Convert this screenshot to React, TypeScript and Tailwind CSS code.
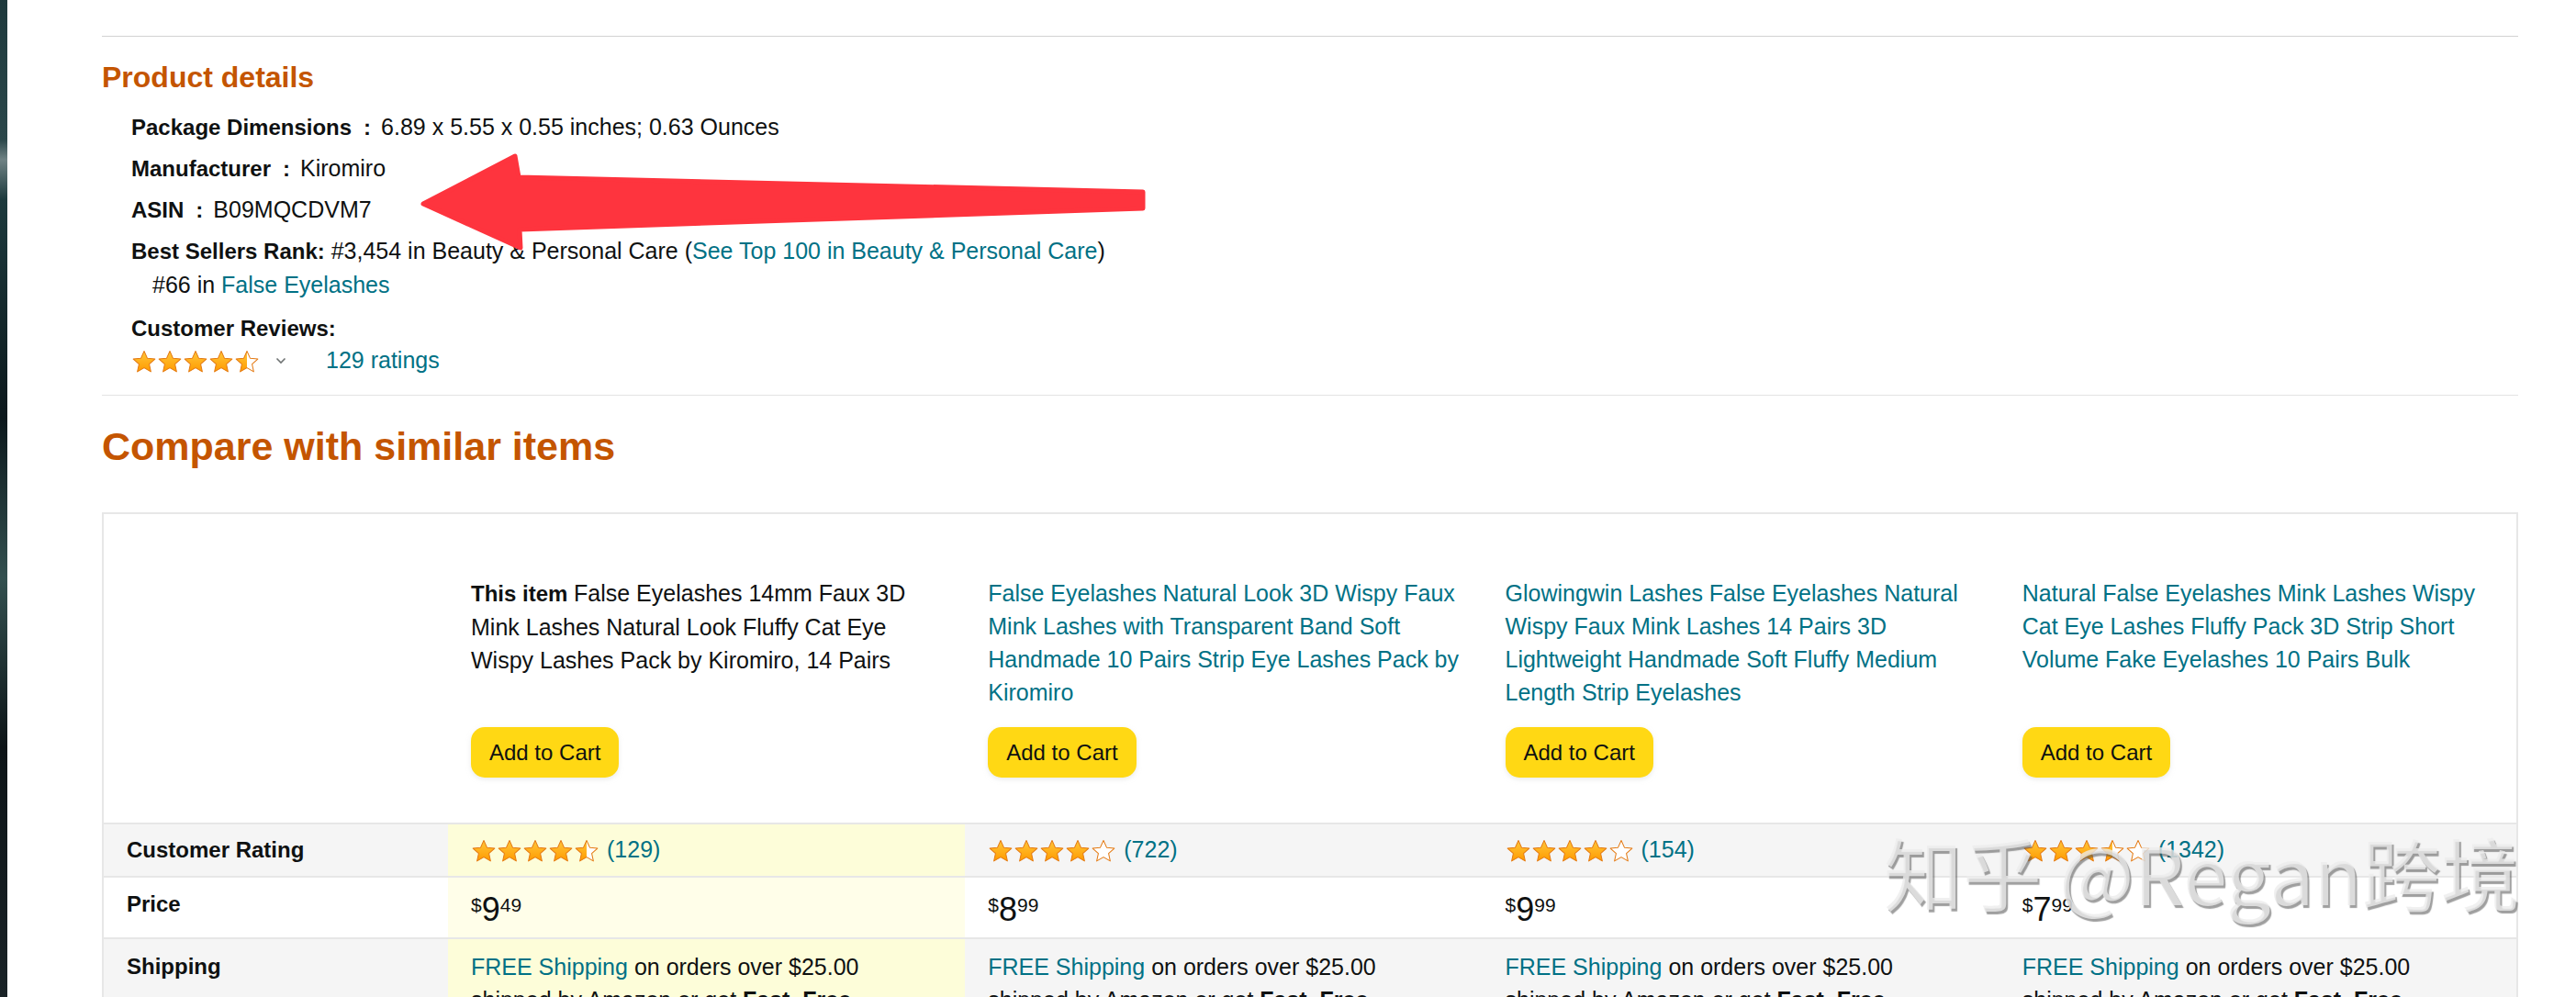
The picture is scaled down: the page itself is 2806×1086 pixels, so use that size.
import { useId } from 'react'

type Fill = 'full' | 'half' | 'empty'

const STAR_PTS = '12,1.4 15.1,8.2 22.6,9 17,14 18.6,21.4 12,17.6 5.4,21.4 7,14 1.4,9 8.9,8.2'

function Star({ fill }: { fill: Fill }) {
  const id = useId().replace(/:/g, '')
  return (
    <svg width="28" height="25" viewBox="0 0 24 22.4" className="shrink-0">
      <defs>
        <linearGradient id={`g${id}`} x1="0" y1="0" x2="0" y2="1">
          <stop offset="0" stopColor="#ffc73a" />
          <stop offset="1" stopColor="#ff9a00" />
        </linearGradient>
        <clipPath id={`c${id}`}>
          <rect x="0" y="0" width={fill === 'half' ? 12 : 24} height="24" />
        </clipPath>
      </defs>
      <polygon points={STAR_PTS} fill="#fff" />
      {fill !== 'empty' && <polygon points={STAR_PTS} fill={`url(#g${id})`} clipPath={`url(#c${id})`} />}
      <polygon points={STAR_PTS} fill="none" stroke="#e47911" strokeWidth="0.9" strokeLinejoin="round" />
    </svg>
  )
}

function Stars({ rating }: { rating: number }) {
  const fills: Fill[] = [0, 1, 2, 3, 4].map(i =>
    rating >= i + 1 ? 'full' : rating >= i + 0.5 ? 'half' : 'empty'
  )
  return (
    <div className="flex">
      {fills.map((f, i) => <Star key={i} fill={f} />)}
    </div>
  )
}

const ITEMS = [
  {
    lines: ['False Eyelashes 14mm Faux 3D', 'Mink Lashes Natural Look Fluffy Cat Eye', 'Wispy Lashes Pack by Kiromiro, 14 Pairs'],
    self: true,
    rating: 4.5,
    count: '129',
    dollars: '9',
    cents: '49',
  },
  {
    lines: ['False Eyelashes Natural Look 3D Wispy Faux', 'Mink Lashes with Transparent Band Soft', 'Handmade 10 Pairs Strip Eye Lashes Pack by', 'Kiromiro'],
    self: false,
    rating: 4,
    count: '722',
    dollars: '8',
    cents: '99',
  },
  {
    lines: ['Glowingwin Lashes False Eyelashes Natural', 'Wispy Faux Mink Lashes 14 Pairs 3D', 'Lightweight Handmade Soft Fluffy Medium', 'Length Strip Eyelashes'],
    self: false,
    rating: 4,
    count: '154',
    dollars: '9',
    cents: '99',
  },
  {
    lines: ['Natural False Eyelashes Mink Lashes Wispy', 'Cat Eye Lashes Fluffy Pack 3D Strip Short', 'Volume Fake Eyelashes 10 Pairs Bulk'],
    self: false,
    rating: 3.5,
    count: '1342',
    dollars: '7',
    cents: '99',
  },
]

function Sep() {
  return <span className="ml-[13px] mr-[11px] text-[24px] font-bold">:</span>
}

function Arrow() {
  return (
    <svg className="pointer-events-none absolute left-0 top-0" width="2806" height="1086">
      <polygon
        points="461,222 561,170 565,193 1245,209 1245,227 566,250 567,270"
        fill="#fe343e"
        stroke="#fe343e"
        strokeWidth="5"
        strokeLinejoin="round"
      />
    </svg>
  )
}

export default function App() {
  return (
    <div className="relative flex h-[1086px] w-full overflow-hidden bg-white font-['Liberation_Sans',Arial,sans-serif] text-[#0f1111]">
      <div className="w-[8px] shrink-0 bg-[linear-gradient(to_bottom,#1e393c_0%,#2b474a_14%,#6f8284_16%,#1d3a3d_20%,#0c181c_42%,#33504f_58%,#0d1417_75%,#1a2327_100%)]" />

      <main className="min-w-0 flex-1 pl-[103px] pr-[63px]">
        <div className="mt-[39px] border-t border-[#d2d2d2]" />

        <h2 className="mt-[28px] text-[32px] font-bold leading-[32px] text-[#c45500]">Product details</h2>

        <div className="mt-[16px] whitespace-nowrap pl-[32px] text-[25px]">
          <div className="leading-[45px]">
            <span className="text-[24px] font-bold">Package Dimensions</span><Sep />6.89 x 5.55 x 0.55 inches; 0.63 Ounces
          </div>
          <div className="leading-[45px]">
            <span className="text-[24px] font-bold">Manufacturer</span><Sep />Kiromiro
          </div>
          <div className="leading-[45px]">
            <span className="text-[24px] font-bold">ASIN</span><Sep />B09MQCDVM7
          </div>
          <div className="pt-[4px] leading-[36px]">
            <span className="text-[24px] font-bold">Best Sellers Rank:</span> #3,454 in Beauty &amp; Personal Care (
            <span className="text-[#007185]">See Top 100 in Beauty &amp; Personal Care</span>)
          </div>
          <div className="pl-[23px] leading-[36px]">
            #66 in <span className="text-[#007185]">False Eyelashes</span>
          </div>
          <div className="mt-[12px] text-[24px] font-bold leading-[36px]">Customer Reviews:</div>
          <div className="mt-[1px] flex h-[32px] items-center">
            <Stars rating={4.5} />
            <svg width="12" height="8" viewBox="0 0 12 8" className="ml-[17px]">
              <path d="M1.5 1.5 L6 6 L10.5 1.5" fill="none" stroke="#6f7373" strokeWidth="1.6" />
            </svg>
            <span className="ml-[43px] text-[#007185]">129 ratings</span>
          </div>
        </div>

        <div className="mt-[21px] border-t border-[#e3e3e3]" />

        <h2 className="mt-[34px] text-[43px] font-bold leading-[43px] text-[#c45500]">Compare with similar items</h2>

        <div className="mt-[50px] border-2 border-[#e7e7e7] text-[25px]">
          {/* header: titles + add to cart */}
          <div className="grid grid-cols-[375px_repeat(4,minmax(0,1fr))] border-b-2 border-[#e7e7e7]">
            <div />
            {ITEMS.map((it, i) => (
              <div key={i} className="pb-[49px] pl-[25px] pt-[68px]">
                <div className={`h-[144px] whitespace-nowrap leading-[36px] ${it.self ? '' : 'text-[#007185]'}`}>
                  {it.lines.map((l, j) => (
                    <div key={j}>
                      {it.self && j === 0 && <span className="text-[24px] font-bold">This item </span>}
                      {l}
                    </div>
                  ))}
                </div>
                <button className="mt-[20px] h-[55px] rounded-[15px] bg-[#ffd814] px-[20px] text-[24px] text-[#0f1111] shadow-[0_2px_5px_rgba(213,217,217,0.5)]">
                  Add to Cart
                </button>
              </div>
            ))}
          </div>

          {/* customer rating */}
          <div className="grid h-[58px] grid-cols-[375px_repeat(4,minmax(0,1fr))] border-b-2 border-[#e7e7e7] bg-[#f5f5f5]">
            <div className="flex items-center pl-[25px] text-[24px] font-bold">Customer Rating</div>
            {ITEMS.map((it, i) => (
              <div key={i} className={`flex items-center pl-[25px] ${it.self ? 'bg-[#fdfdd9]' : ''}`}>
                <Stars rating={it.rating} />
                <span className="ml-[8px] text-[#007185]">({it.count})</span>
              </div>
            ))}
          </div>

          {/* price */}
          <div className="grid h-[67px] grid-cols-[375px_repeat(4,minmax(0,1fr))] border-b-2 border-[#e7e7e7] bg-white">
            <div className="pl-[25px] pt-[11px] text-[24px] font-bold leading-[36px]">Price</div>
            {ITEMS.map((it, i) => (
              <div key={i} className={`flex items-start pl-[25px] pt-[17px] ${it.self ? 'bg-[#fffee9]' : ''}`}>
                <span className="mt-[2px] text-[21px] leading-none">$</span>
                <span className="text-[36px] leading-none">{it.dollars}</span>
                <span className="mt-[2px] text-[21px] leading-none">{it.cents}</span>
              </div>
            ))}
          </div>

          {/* shipping */}
          <div className="grid grid-cols-[375px_repeat(4,minmax(0,1fr))] bg-[#f5f5f5]">
            <div className="pl-[25px] pt-[12px] text-[24px] font-bold leading-[36px]">Shipping</div>
            {ITEMS.map((it, i) => (
              <div key={i} className={`whitespace-nowrap pb-[20px] pl-[25px] pt-[12px] leading-[36px] ${it.self ? 'bg-[#fdfdd9]' : ''}`}>
                <div>
                  <span className="text-[#007185]">FREE Shipping</span> on orders over $25.00
                </div>
                <div>
                  shipped by Amazon or get <span className="font-bold">Fast, Free</span>
                </div>
                <div>Shipping with Amazon Prime</div>
              </div>
            ))}
          </div>
        </div>
      </main>

      <Arrow />

      <div className="pointer-events-none absolute left-[2052px] top-[906px] whitespace-nowrap font-['Noto_Sans_CJK_SC',sans-serif] text-[86px] leading-none text-[rgba(236,236,236,0.78)] [text-shadow:2px_3px_1px_rgba(80,80,80,0.55)]">
        知乎 @Regan跨境
      </div>
    </div>
  )
}
